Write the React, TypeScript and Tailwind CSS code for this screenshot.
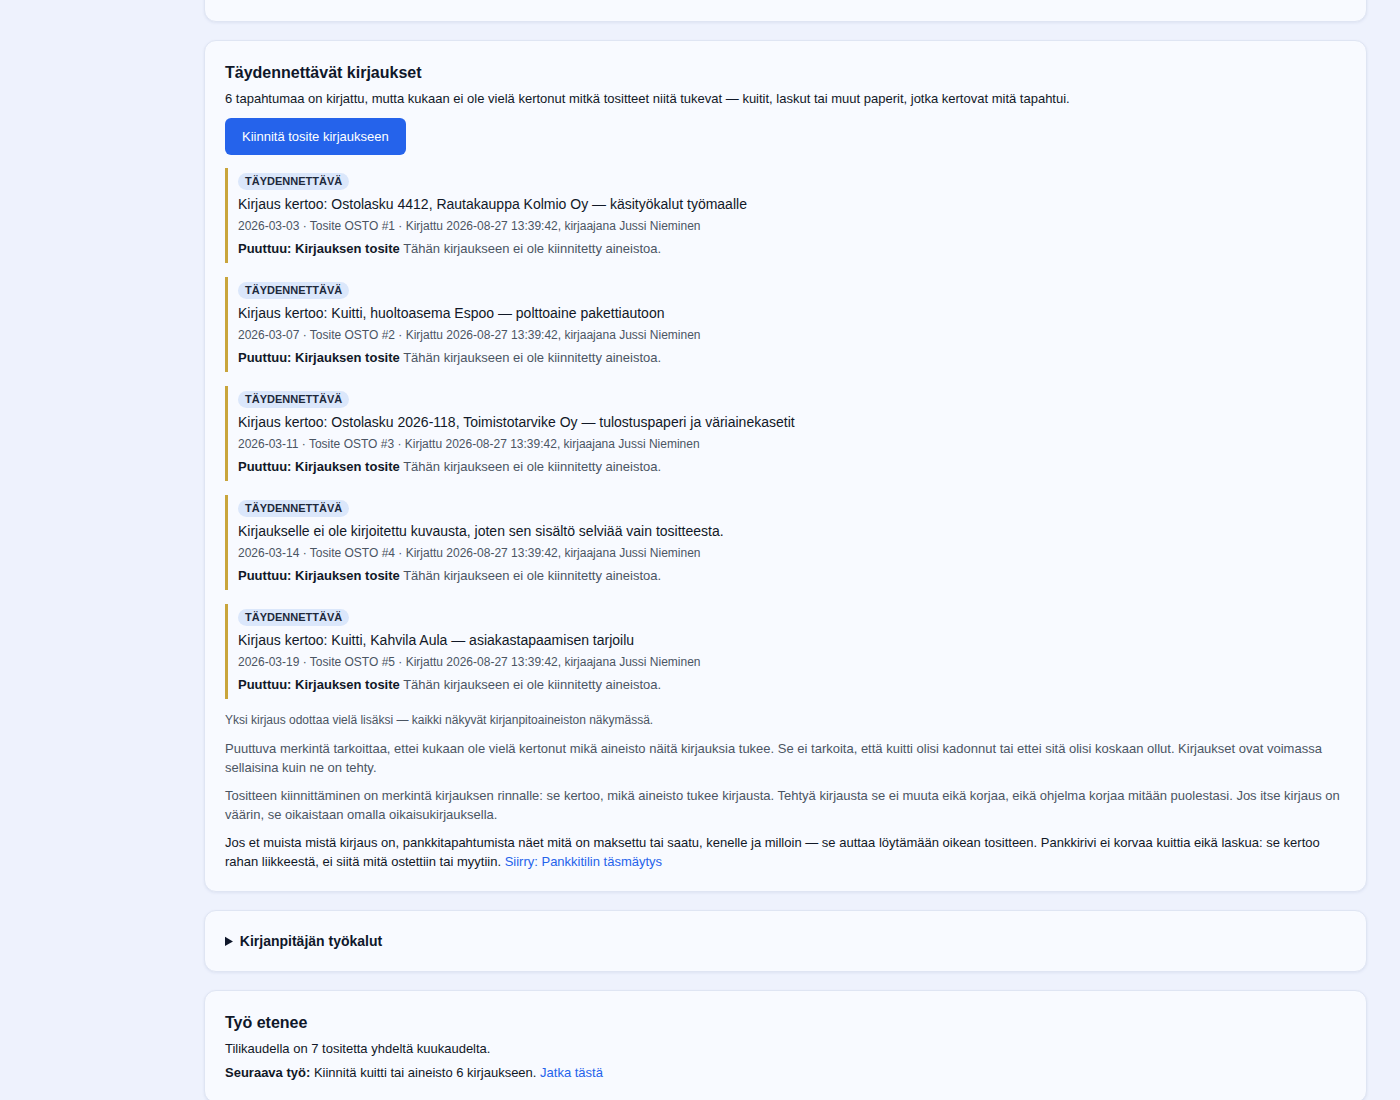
import React from "react";

type Entry = {
  title: string;
  date: string;
  voucher: string;
};

const entries: Entry[] = [
  {
    title: "Kirjaus kertoo: Ostolasku 4412, Rautakauppa Kolmio Oy — käsityökalut työmaalle",
    date: "2026-03-03",
    voucher: "OSTO #1",
  },
  {
    title: "Kirjaus kertoo: Kuitti, huoltoasema Espoo — polttoaine pakettiautoon",
    date: "2026-03-07",
    voucher: "OSTO #2",
  },
  {
    title: "Kirjaus kertoo: Ostolasku 2026-118, Toimistotarvike Oy — tulostuspaperi ja väriainekasetit",
    date: "2026-03-11",
    voucher: "OSTO #3",
  },
  {
    title: "Kirjaukselle ei ole kirjoitettu kuvausta, joten sen sisältö selviää vain tositteesta.",
    date: "2026-03-14",
    voucher: "OSTO #4",
  },
  {
    title: "Kirjaus kertoo: Kuitti, Kahvila Aula — asiakastapaamisen tarjoilu",
    date: "2026-03-19",
    voucher: "OSTO #5",
  },
];

function Card({ children, className = "" }: { children: React.ReactNode; className?: string }) {
  return (
    <section
      className={
        "rounded-[12px] border border-[#dfe5f3] bg-[#f8faff] px-5 shadow-[0_1px_3px_rgba(30,50,120,0.08)] " +
        className
      }
    >
      {children}
    </section>
  );
}

function EntryRow({ entry }: { entry: Entry }) {
  return (
    <div className="border-l-[3px] border-[#c9a53c] pl-[10px] pt-[5px] pb-[5px]">
      <span className="block w-fit rounded-full bg-[#dbe7fb] px-[7px] py-[2px] text-[11px] font-bold uppercase leading-[13px] text-[#1e293b]">
        Täydennettävä
      </span>
      <div className="mt-[4px] text-[14px] leading-[20px] text-[#111827]">{entry.title}</div>
      <div className="mt-[3px] text-[12px] leading-[18px] text-[#4b5563]">
        {entry.date} · Tosite {entry.voucher} · Kirjattu 2026-08-27 13:39:42, kirjaajana Jussi Nieminen
      </div>
      <div className="mt-[4px] text-[13px] leading-[19px] text-[#4b5563]">
        <strong className="font-bold text-[#111827]">Puuttuu: Kirjauksen tosite</strong> Tähän kirjaukseen ei ole
        kiinnitetty aineistoa.
      </div>
    </div>
  );
}

export default function App() {
  return (
    <div
      className="min-h-[1100px] bg-[#eef2fd] pl-[204px] pr-[33px]"
      style={{ fontFamily: '"Liberation Sans", Arial, sans-serif' }}
    >
      <div className="flex flex-col gap-[18px]">
        <Card className="-mt-[60px] h-[82px]">
          <div />
        </Card>

        <Card className="pt-5 pb-5">
          <h2 className="text-[16px] font-bold leading-[24px] text-[#0f172a]">Täydennettävät kirjaukset</h2>
          <p className="mt-[4px] text-[13px] leading-[19px] text-[#111827]">
            6 tapahtumaa on kirjattu, mutta kukaan ei ole vielä kertonut mitkä tositteet niitä tukevat — kuitit, laskut
            tai muut paperit, jotka kertovat mitä tapahtui.
          </p>
          <button className="mt-[10px] h-[37px] rounded-[6px] bg-[#2563eb] px-[17px] text-[13px] text-white">
            Kiinnitä tosite kirjaukseen
          </button>
          <div className="mt-[13px] flex flex-col gap-[14px]">
            {entries.map((e) => (
              <EntryRow key={e.voucher} entry={e} />
            ))}
          </div>
          <p className="mt-[12px] text-[12px] leading-[18px] text-[#4b5563]">
            Yksi kirjaus odottaa vielä lisäksi — kaikki näkyvät kirjanpitoaineiston näkymässä.
          </p>
          <p className="mt-[10px] text-[13px] leading-[19px] text-[#4b5563]">
            Puuttuva merkintä tarkoittaa, ettei kukaan ole vielä kertonut mikä aineisto näitä kirjauksia tukee. Se ei
            tarkoita, että kuitti olisi kadonnut tai ettei sitä olisi koskaan ollut. Kirjaukset ovat voimassa sellaisina
            kuin ne on tehty.
          </p>
          <p className="mt-[9px] text-[13px] leading-[19px] text-[#4b5563]">
            Tositteen kiinnittäminen on merkintä kirjauksen rinnalle: se kertoo, mikä aineisto tukee kirjausta. Tehtyä
            kirjausta se ei muuta eikä korjaa, eikä ohjelma korjaa mitään puolestasi. Jos itse kirjaus on väärin, se
            oikaistaan omalla oikaisukirjauksella.
          </p>
          <p className="mt-[9px] text-[13px] leading-[19px] text-[#111827]">
            Jos et muista mistä kirjaus on, pankkitapahtumista näet mitä on maksettu tai saatu, kenelle ja milloin — se
            auttaa löytämään oikean tositteen. Pankkirivi ei korvaa kuittia eikä laskua: se kertoo rahan liikkeestä, ei
            siitä mitä ostettiin tai myytiin.{" "}
            <a className="text-[#2563eb]" href="#">
              Siirry: Pankkitilin täsmäytys
            </a>
          </p>
        </Card>

        <Card className="py-5">
          <details>
            <summary className="cursor-pointer text-[14px] font-bold leading-[20px] text-[#0f172a]">
              Kirjanpitäjän työkalut
            </summary>
          </details>
        </Card>

        <Card className="pt-5 pb-5">
          <h2 className="text-[16px] font-bold leading-[24px] text-[#0f172a]">Työ etenee</h2>
          <p className="mt-[4px] text-[13px] leading-[19px] text-[#111827]">
            Tilikaudella on 7 tositetta yhdeltä kuukaudelta.
          </p>
          <p className="mt-[5px] text-[13px] leading-[19px] text-[#111827]">
            <strong className="font-bold">Seuraava työ:</strong> Kiinnitä kuitti tai aineisto 6 kirjaukseen.{" "}
            <a className="text-[#2563eb]" href="#">
              Jatka tästä
            </a>
          </p>
        </Card>
      </div>
    </div>
  );
}
